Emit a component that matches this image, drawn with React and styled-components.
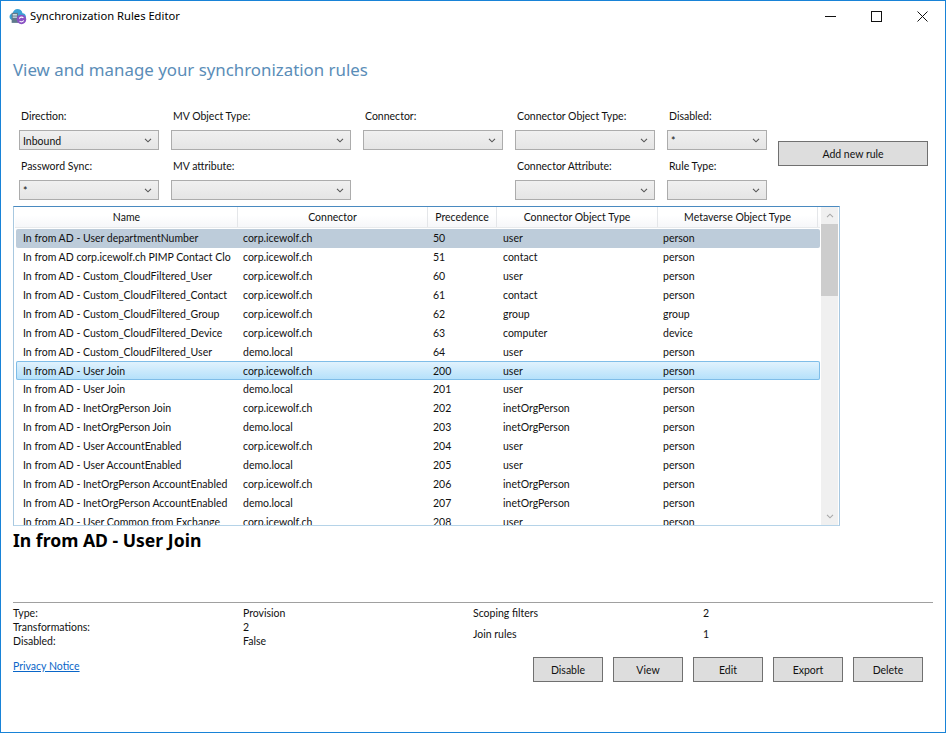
import React from "react";
import styled, { createGlobalStyle } from "styled-components";

const Global = createGlobalStyle`
  html, body { margin: 0; padding: 0; background: #fff; }
  * { box-sizing: border-box; }
`;

const Win = styled.div`
  width: 946px; height: 733px; border: 1px solid #1883d7; background: #fff; overflow: hidden;
  display: flex; flex-direction: column;
  font-family: "Lato", "Noto Sans", sans-serif; font-size: 10.5px; color: #111; line-height: 14px;
`;
const TitleBar = styled.div`
  height: 30px; flex: none; display: flex; align-items: center; padding-left: 8px;
`;
const TitleText = styled.div`
  margin-left: 3px; font-family: "Noto Sans", sans-serif; font-size: 11.2px; color: #000; flex: 1;
`;
const WinBtn = styled.div`
  width: 46px; height: 30px; display: flex; align-items: center; justify-content: center;
`;
const WinBtns = styled.div`
  display: flex; margin-right: 0;
`;
const Heading = styled.h1`
  margin: 0; padding: 0 0 0 12px; margin-top: 28px; height: 24px; font-family: "Noto Sans", sans-serif; font-weight: 400; font-size: 16.85px; line-height: 22px; color: #5a8db8;
`;
const Filters = styled.div`
  margin-top: 17px; padding-left: 18px; display: flex;
`;
const FilterGrid = styled.div`
  display: grid; grid-template-columns: 140px 180px 140px 140px 100px; column-gap: 12px;
  grid-auto-rows: 50px;
`;
const Field = styled.div`
  display: flex; flex-direction: column; justify-content: flex-end; height: 50px;
`;
const FieldLabel = styled.div`
  padding-left: 2px; height: 14px; margin-bottom: 7px;
`;
const Combo = styled.div`
  height: 20px; border: 1px solid #acacac; background: linear-gradient(#f0f0f0, #e5e5e5); padding: 1px 6px 0 3px;
  display: flex; align-items: center; justify-content: space-between;
`;
const AddButton = styled.div`
  margin-left: 11px; margin-top: 41px; width: 150px; height: 25px; border: 1px solid #707070; background: #dddddd;
  display: flex; align-items: center; justify-content: center;
`;
const Table = styled.div`
  margin: 6px 0 0 12px; width: 827px; height: 320px; flex: none; display: flex; overflow: hidden;
  border: 1px solid; border-color: #4a8ac0 #a8c8e0 #b5d3e8 #a8c8e0; padding-left: 1px;
`;
const TableMain = styled.div`
  width: 805px; flex: none; display: flex; flex-direction: column;
`;
const HeaderRow = styled.div`
  display: flex; height: 21px; flex: none; padding-left: 1px; background: linear-gradient(#fff 40%, #f6f7f9); border-bottom: 1px solid #e8eaec; margin-bottom: 1px;
`;
const HeaderCell = styled.div`
  width: ${p => p.$w}px; flex: none; display: flex; align-items: center; justify-content: center;
  border-right: 1px solid #e4e6e9;
`;
const Row = styled.div`
  display: flex; height: 18.88px; flex: none; align-items: center; border-radius: 2px; margin-left: 1px;
  ${p => p.$state === "inactive" && `background: #bdccda;`}
  ${p => p.$state === "active" && `background: linear-gradient(#e3f3fd, #b3e0fb); box-shadow: inset 0 0 0 1px #7fbde8;`}
`;
const Cell = styled.div`
  width: ${p => p.$w - 7}px; margin-right: 7px; flex: none; padding-left: ${p => p.$pl}px; overflow: hidden; white-space: nowrap;
`;
const ScrollBar = styled.div`
  width: 17px; margin-left: 1px; flex: none; background: #f0f0f0; display: flex; flex-direction: column; align-items: center;
`;
const ScrollBtn = styled.div`
  height: 17px; flex: none; display: flex; align-items: center; justify-content: center;
`;
const Thumb = styled.div`
  height: 72px; width: 17px; flex: none; background: #cdcdcd;
`;
const Track = styled.div`
  flex: 1;
`;
const Selected = styled.div`
  margin: 4px 0 0 12px; height: 24px; font-family: "Noto Sans", sans-serif; font-weight: 700; font-size: 17.6px; line-height: 20px; color: #000;
`;
const Divider = styled.div`
  margin: 48px 0 0 12px; width: 920px; height: 1px; background: #a0a0a0; flex: none;
`;
const Details = styled.div`
  margin: 3px 0 0 12px; display: grid; grid-template-columns: 230px 230px 230px 40px;
`;
const DetailCol = styled.div`
  display: flex; flex-direction: column;
`;
const DetailLine = styled.div`
  height: ${p => p.$h || 14}px; line-height: 14px;
`;
const Footer = styled.div`
  display: flex; align-items: flex-start; justify-content: space-between; padding: 0 22px 0 12px; margin-top: 9px;
`;
const Link = styled.a`
  color: #0a66c8; text-decoration: underline; margin-top: 2px; cursor: pointer;
`;
const Actions = styled.div`
  display: flex; gap: 10px;
`;
const ActionBtn = styled.div`
  width: 70px; height: 25px; border: 1px solid #707070; background: #dddddd; display: flex; align-items: center; justify-content: center;
`;

const Chevron = ({ color = "#555" }) => (
  <svg width="8" height="5" viewBox="0 0 8 5"><path d="M1 .8l3 3 3-3" fill="none" stroke={color} strokeWidth="1.100" /></svg>
);

const Logo = () => (
  <svg width="18" height="18" viewBox="0 0 17 17">
    <path d="M3.500 12.500C1.500 12.500.5 11 .5 9.300c0-1.700 1.200-3 2.800-3.100C3.800 3.800 5.800 2 8 2c2.300 0 4.200 1.500 4.800 3.800 1.900.1 3.200 1.600 3.200 3.300 0 1.900-1.400 3.400-3.500 3.400z" fill="#3aa2d6" />
    <rect x="2.500" y="5.500" width="6" height="9.500" fill="#5f7a8c" />
    <rect x="3.500" y="6.800" width="4" height="1.200" fill="#e8f2f8" />
    <rect x="3.500" y="9" width="4" height="1.200" fill="#c9dbe6" />
    <circle cx="11.800" cy="11.800" r="4.500" fill="#8a52c4" />
    <path d="M9.800 11a2.200 2.200 0 0 1 3.800-.6M13.800 12.600a2.200 2.200 0 0 1-3.800.6" fill="none" stroke="#fff" strokeWidth="1" />
  </svg>
);

const cols = [
  { w: 222, pl: 7, t: "Name" },
  { w: 190, pl: 5, t: "Connector" },
  { w: 69, pl: 5, t: "Precedence" },
  { w: 161, pl: 6, t: "Connector Object Type" },
  { w: 160, pl: 5, t: "Metaverse Object Type" },
];

const C = "corp.icewolf.ch";
const D = "demo.local";
const rows = [
  ["In from AD - User departmentNumber", C, "50", "user", "person", "inactive"],
  ["In from AD corp.icewolf.ch PIMP Contact Cloud", C, "51", "contact", "person"],
  ["In from AD - Custom_CloudFiltered_User", C, "60", "user", "person"],
  ["In from AD - Custom_CloudFiltered_Contact", C, "61", "contact", "person"],
  ["In from AD - Custom_CloudFiltered_Group", C, "62", "group", "group"],
  ["In from AD - Custom_CloudFiltered_Device", C, "63", "computer", "device"],
  ["In from AD - Custom_CloudFiltered_User", D, "64", "user", "person"],
  ["In from AD - User Join", C, "200", "user", "person", "active"],
  ["In from AD - User Join", D, "201", "user", "person"],
  ["In from AD - InetOrgPerson Join", C, "202", "inetOrgPerson", "person"],
  ["In from AD - InetOrgPerson Join", D, "203", "inetOrgPerson", "person"],
  ["In from AD - User AccountEnabled", C, "204", "user", "person"],
  ["In from AD - User AccountEnabled", D, "205", "user", "person"],
  ["In from AD - InetOrgPerson AccountEnabled", C, "206", "inetOrgPerson", "person"],
  ["In from AD - InetOrgPerson AccountEnabled", D, "207", "inetOrgPerson", "person"],
  ["In from AD - User Common from Exchange", C, "208", "user", "person"],
];

const filters = [
  ["Direction:", "Inbound"], ["MV Object Type:", ""], ["Connector:", ""], ["Connector Object Type:", ""], ["Disabled:", "*"],
  ["Password Sync:", "*"], ["MV attribute:", ""], null, ["Connector Attribute:", ""], ["Rule Type:", ""],
];

export default function App() {
  return (
    <Win>
      <Global />
      <TitleBar>
        <Logo />
        <TitleText>Synchronization Rules Editor</TitleText>
        <WinBtns>
          <WinBtn><svg width="11" height="11" viewBox="0 0 11 11"><path d="M0 5.500h11" stroke="#111" /></svg></WinBtn>
          <WinBtn><svg width="11" height="11" viewBox="0 0 11 11"><rect x=".5" y=".5" width="10" height="10" fill="none" stroke="#111" /></svg></WinBtn>
          <WinBtn><svg width="11" height="11" viewBox="0 0 11 11"><path d="M.5.500l10 10M10.500.500l-10 10" stroke="#111" /></svg></WinBtn>
        </WinBtns>
      </TitleBar>
      <Heading>View and manage your synchronization rules</Heading>
      <Filters>
        <FilterGrid>
          {filters.map((f, i) => f ? (
            <Field key={i}>
              <FieldLabel>{f[0]}</FieldLabel>
              <Combo><span>{f[1]}</span><Chevron /></Combo>
            </Field>
          ) : <div key={i} />)}
        </FilterGrid>
        <AddButton>Add new rule</AddButton>
      </Filters>
      <Table>
        <TableMain>
          <HeaderRow>
            {cols.map(c => <HeaderCell key={c.t} $w={c.w}>{c.t}</HeaderCell>)}
          </HeaderRow>
          {rows.map((r, i) => (
            <Row key={i} $state={r[5]}>
              {cols.map((c, j) => <Cell key={j} $w={c.w} $pl={c.pl}>{r[j]}</Cell>)}
            </Row>
          ))}
        </TableMain>
        <ScrollBar>
          <ScrollBtn><svg width="8" height="5" viewBox="0 0 8 5"><path d="M1 4.200l3-3 3 3" fill="none" stroke="#a8a8a8" strokeWidth="1.100" /></svg></ScrollBtn>
          <Thumb />
          <Track />
          <ScrollBtn><Chevron color="#a8a8a8" /></ScrollBtn>
        </ScrollBar>
      </Table>
      <Selected>In from AD - User Join</Selected>
      <Divider />
      <Details>
        <DetailCol>
          <DetailLine>Type:</DetailLine>
          <DetailLine>Transformations:</DetailLine>
          <DetailLine>Disabled:</DetailLine>
        </DetailCol>
        <DetailCol>
          <DetailLine>Provision</DetailLine>
          <DetailLine>2</DetailLine>
          <DetailLine>False</DetailLine>
        </DetailCol>
        <DetailCol>
          <DetailLine $h={21}>Scoping filters</DetailLine>
          <DetailLine>Join rules</DetailLine>
        </DetailCol>
        <DetailCol>
          <DetailLine $h={21}>2</DetailLine>
          <DetailLine>1</DetailLine>
        </DetailCol>
      </Details>
      <Footer>
        <Link>Privacy Notice</Link>
        <Actions>
          {["Disable", "View", "Edit", "Export", "Delete"].map(b => <ActionBtn key={b}>{b}</ActionBtn>)}
        </Actions>
      </Footer>
    </Win>
  );
}
